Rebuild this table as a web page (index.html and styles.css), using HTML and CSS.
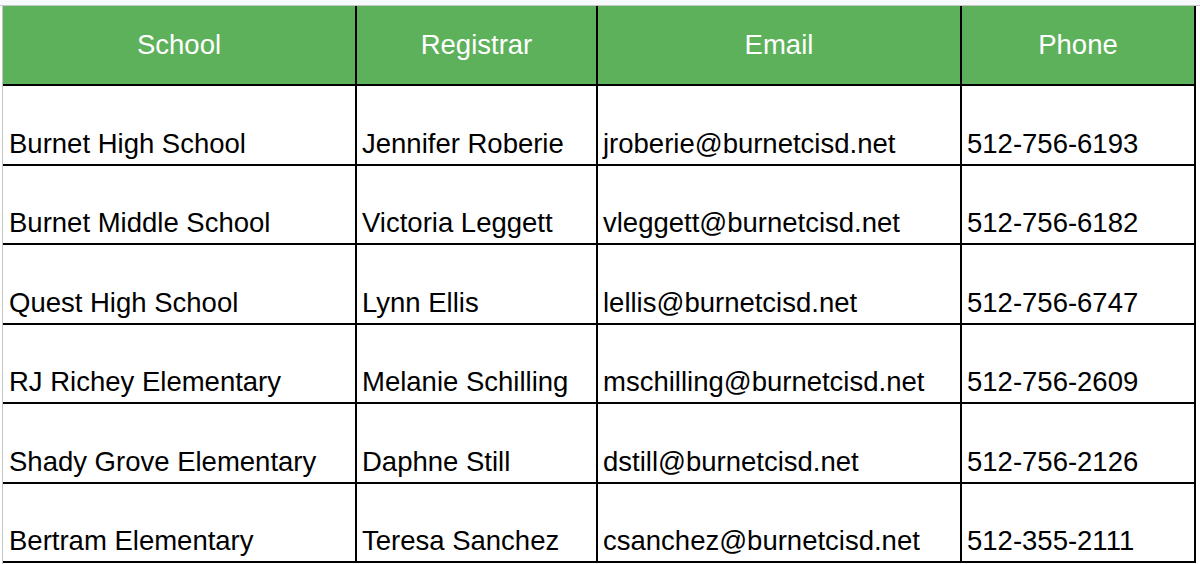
FILE: index.html
```html
<!DOCTYPE html>
<html>
<head>
<meta charset="utf-8">
<link rel="stylesheet" href="styles.css">
</head>
<body>
<div class="strip"></div>
<div class="sheet">
  <table class="grid">
    <colgroup>
      <col class="c1"><col class="c2"><col class="c3"><col class="c4">
    </colgroup>
    <thead>
      <tr><th>School</th><th>Registrar</th><th>Email</th><th>Phone</th></tr>
    </thead>
    <tbody>
      <tr><td>Burnet High School</td><td>Jennifer Roberie</td><td>jroberie@burnetcisd.net</td><td>512-756-6193</td></tr>
      <tr><td>Burnet Middle School</td><td>Victoria Leggett</td><td>vleggett@burnetcisd.net</td><td>512-756-6182</td></tr>
      <tr><td>Quest High School</td><td>Lynn Ellis</td><td>lellis@burnetcisd.net</td><td>512-756-6747</td></tr>
      <tr><td>RJ Richey Elementary</td><td>Melanie Schilling</td><td>mschilling@burnetcisd.net</td><td>512-756-2609</td></tr>
      <tr><td>Shady Grove Elementary</td><td>Daphne Still</td><td>dstill@burnetcisd.net</td><td>512-756-2126</td></tr>
      <tr><td>Bertram Elementary</td><td>Teresa Sanchez</td><td>csanchez@burnetcisd.net</td><td>512-355-2111</td></tr>
    </tbody>
  </table>
</div>
</body>
</html>
```
FILE: styles.css
```css
html, body {
  margin: 0;
  padding: 0;
  background: #ffffff;
  overflow: hidden;
}
body {
  font-family: "Liberation Sans", Arial, sans-serif;
  width: 1200px;
  height: 564px;
}
.strip {
  height: 5px;
  background: #f8f9fa;
  border-bottom: 1px solid #c4c7c5;
}
.sheet {
  margin-left: 2px;
  border-left: 1px solid #c4c7c5;
  height: 558px;
}
.grid {
  border-collapse: separate;
  border-spacing: 0;
  table-layout: fixed;
  width: 1193px;
  font-size: 27.5px;
  color: #000000;
}
.c1 { width: 354px; }
.c2 { width: 241px; }
.c3 { width: 364px; }
.c4 { width: 234px; }
.grid th {
  background: #5db15b;
  color: #ffffff;
  font-weight: normal;
  text-align: center;
  vertical-align: middle;
  height: 80px;
  padding: 0 4px;
  box-sizing: border-box;
  border-right: 2px solid #000000;
  border-bottom: 2px solid #000000;
  white-space: nowrap;
}
.grid td {
  height: 79.5px;
  box-sizing: border-box;
  padding: 0 4px 4px 5px;
  vertical-align: bottom;
  text-align: left;
  border-right: 2px solid #000000;
  border-bottom: 2px solid #000000;
  white-space: nowrap;
  overflow: hidden;
}
.grid td:first-child {
  padding-left: 6px;
}
```
